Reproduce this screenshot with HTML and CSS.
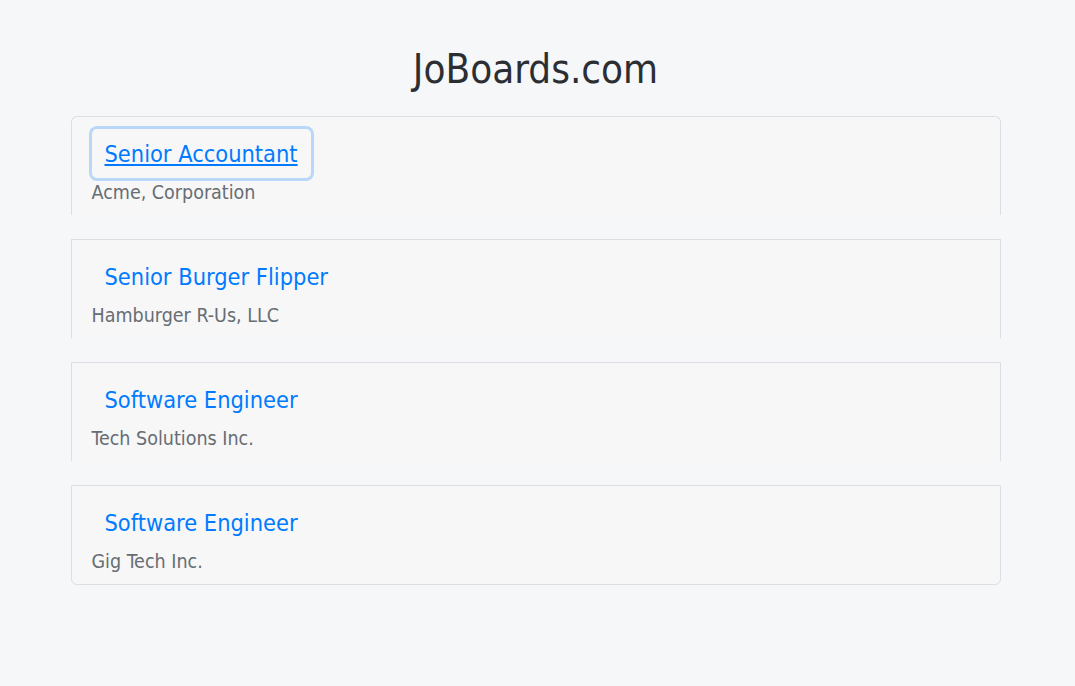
FILE: index.html
```html
<!DOCTYPE html>
<html lang="en">
<head>
<meta charset="utf-8">
<title>JoBoards.com</title>
<link rel="stylesheet" href="styles.css">
</head>
<body>
<div class="container">
  <h1 class="title">JoBoards.com</h1>
  <ul class="job-list">
    <li class="job-item">
      <a class="job-link focused" href="#">Senior Accountant</a>
      <div class="company">Acme, Corporation</div>
    </li>
    <li class="job-item">
      <a class="job-link" href="#">Senior Burger Flipper</a>
      <div class="company">Hamburger R-Us, LLC</div>
    </li>
    <li class="job-item">
      <a class="job-link" href="#">Software Engineer</a>
      <div class="company">Tech Solutions Inc.</div>
    </li>
    <li class="job-item">
      <a class="job-link" href="#">Software Engineer</a>
      <div class="company">Gig Tech Inc.</div>
    </li>
  </ul>
</div>
</body>
</html>
```
FILE: styles.css
```css
html, body {
  margin: 0;
  padding: 0;
}
body {
  background: #f6f7f9;
  font-family: "DejaVu Sans Condensed", "DejaVu Sans", sans-serif;
  color: #212529;
}
.container {
  max-width: 960px;
  margin: 0 auto;
  padding: 45px 17px 0 13px;
  box-sizing: border-box;
}
.title {
  margin: 0 0 23px;
  font-size: 40px;
  line-height: 48px;
  font-weight: normal;
  text-align: center;
  color: #2b2f33;
}
.job-list {
  list-style: none;
  margin: 0;
  padding: 0;
  display: flex;
  flex-direction: column;
  gap: 24px;
}
.job-item {
  background: #f7f7f7;
  border: 1px solid #dcdee1;
  border-bottom: none;
  padding: 12px 20px 10px;
  display: flex;
  flex-direction: column;
  align-items: flex-start;
}
.job-item:first-child {
  border-top-left-radius: 6px;
  border-top-right-radius: 6px;
}
.job-item:last-child {
  border-bottom: 1px solid #dcdee1;
  border-bottom-left-radius: 6px;
  border-bottom-right-radius: 6px;
}
.job-link {
  display: inline-block;
  padding: 7px 12px 5px;
  border: 1px solid transparent;
  border-radius: 5px;
  font-size: 23.4px;
  line-height: 35px;
  color: #007bff;
  text-decoration: none;
}
.job-link.focused {
  text-decoration: underline;
  box-shadow: 0 0 0 3px rgba(0, 123, 255, 0.25);
}
.company {
  padding-top: 2px;
  font-size: 19.5px;
  line-height: 25px;
  color: #666d74;
}
```
